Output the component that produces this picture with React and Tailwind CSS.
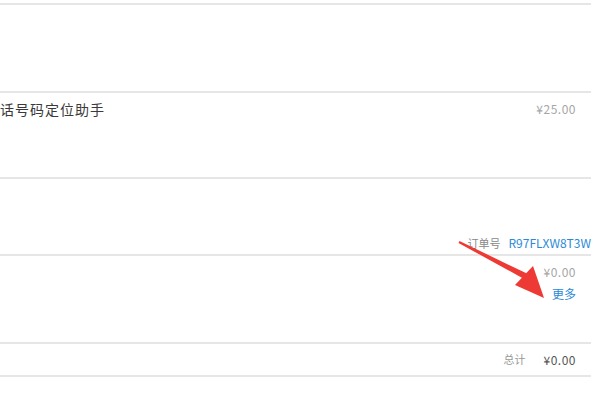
import React from 'react';

const font = { fontFamily: '"Noto Sans CJK SC", "Liberation Sans", sans-serif' };

function Arrow() {
  return (
    <svg className="absolute left-[455px] top-[238px]" width="100" height="66" viewBox="0 0 100 66">
      <path d="M3.5 4.9 L4.5 3.1 L71.4 35.3 L68.6 40.7 Z" fill="#ee3a35" />
      <path d="M89 60 L60 47 L78 28 Z" fill="#ee3a35" />
    </svg>
  );
}

export default function App() {
  return (
    <div className="relative w-[600px] h-[400px] bg-white overflow-hidden" style={font}>
      <div className="w-[591px] mt-[3px] border-t-2 border-[#e6e6e6]">
        <div className="h-[86px]" />
        <div className="h-[86px] border-t-2 border-[#e6e6e6] flex justify-between items-start pt-[6px] pr-[15px]">
          <span className="text-[14px] tracking-[1px] text-[#3a3a3a] leading-[20px]">话号码定位助手</span>
          <span className="text-[12px] tracking-[0.5px] text-[#a6a6a6] leading-[20px]">¥25.00</span>
        </div>
        <div className="h-[77px] border-t-2 border-[#e6e6e6] flex justify-end items-end pb-[3px]">
          <span className="text-[11px] text-[#888] leading-[16px] mr-[8px]">订单号</span>
          <span className="text-[12px] text-[#2b8ad6] leading-[16px]">R97FLXW8T3W</span>
        </div>
        <div className="h-[88px] border-t-2 border-[#e6e6e6] flex flex-col items-end pt-[7px] pr-[15px]">
          <span className="text-[12px] tracking-[0.5px] text-[#a6a6a6] leading-[18px]">¥0.00</span>
          <span className="text-[12px] text-[#2b8ad6] leading-[18px] mt-[4px]">更多</span>
        </div>
        <div className="h-[35px] border-t-2 border-b-2 border-[#e6e6e6] flex justify-end items-center pr-[15px]">
          <span className="text-[11px] text-[#999] mr-[18px]">总计</span>
          <span className="text-[12px] tracking-[0.5px] text-[#555]">¥0.00</span>
        </div>
      </div>
      <Arrow />
    </div>
  );
}
